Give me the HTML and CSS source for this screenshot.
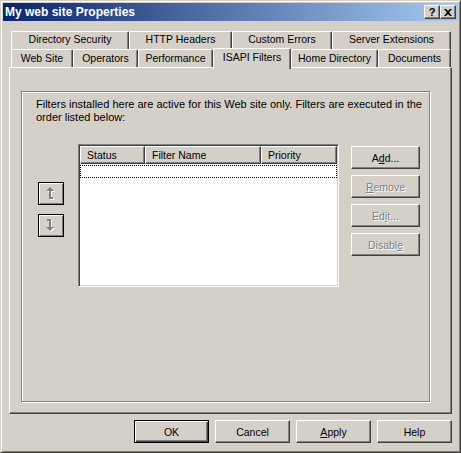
FILE: index.html
```
<!DOCTYPE html>
<html lang="en">
<head>
    <meta charset="UTF-8">
    <meta name="viewport" content="width=device-width, initial-scale=1.0">
    <title>My web site Properties</title>
    <link rel="stylesheet" href="styles.css">
</head>
<body>
    <div class="window">
        <div class="titlebar">
            <span class="title">My web site Properties</span>
            <div class="caption-buttons">
                <span class="cap-btn help">?</span>
                <span class="cap-btn">
                    <svg width="8" height="7" viewBox="0 0 8 7"><path d="M0 0h2l2 2 2-2h2L5 3.5 8 7H6L4 5 2 7H0l3-3.5z" fill="#000"/></svg>
                </span>
            </div>
        </div>

        <div class="content">
            <div class="tabs">
                <div class="tab-row back">
                    <div class="tab" style="width:118px">Directory Security</div>
                    <div class="tab" style="width:103px">HTTP Headers</div>
                    <div class="tab" style="width:100px">Custom Errors</div>
                    <div class="tab" style="width:119px">Server Extensions</div>
                </div>
                <div class="tab-row front">
                    <div class="tab" style="width:62px">Web Site</div>
                    <div class="tab" style="width:65px">Operators</div>
                    <div class="tab" style="width:75px">Performance</div>
                    <div class="tab selected">ISAPI Filters</div>
                    <div class="tab" style="width:87px">Home Directory</div>
                    <div class="tab" style="width:73px">Documents</div>
                </div>
            </div>

            <div class="panel">
                <div class="group">
                    <p class="intro">Filters installed here are active for this Web site only. Filters are executed in the<br>order listed below:</p>
                    <div class="filters">
                        <div class="order-buttons">
                            <button class="arrow-btn">
                                <svg width="10" height="13" viewBox="0 0 10 13">
                                    <path d="M5 1l4 4H6v6h2v2H4V5H1z" fill="#fff"/>
                                    <path d="M4 0l4 4H5v6h2v2H3V4H0z" fill="#808080"/>
                                </svg>
                            </button>
                            <button class="arrow-btn">
                                <svg width="10" height="13" viewBox="0 0 10 13">
                                    <path d="M5 13L1 9H4V3H2V1H6V9H9Z" fill="#fff"/>
                                    <path d="M4 12L0 8H3V2H1V0H5V8H8Z" fill="#808080"/>
                                </svg>
                            </button>
                        </div>
                        <div class="listview">
                            <div class="list-header">
                                <div class="col" style="width:65px">Status</div>
                                <div class="col" style="width:116px">Filter Name</div>
                                <div class="col last">Priority</div>
                            </div>
                            <div class="focus-row"></div>
                        </div>
                        <div class="side-buttons">
                            <button class="btn">A<u>d</u>d...</button>
                            <button class="btn" disabled><u>R</u>emove</button>
                            <button class="btn" disabled>Ed<u>i</u>t...</button>
                            <button class="btn" disabled>Disabl<u>e</u></button>
                        </div>
                    </div>
                </div>
            </div>

            <div class="dialog-buttons">
                <button class="btn wide default">OK</button>
                <button class="btn wide">Cancel</button>
                <button class="btn wide"><u>A</u>pply</button>
                <button class="btn wide">Help</button>
            </div>
        </div>
    </div>
</body>
</html>
```

FILE: styles.css
```
body {
    margin: 0;
    background: #d4d0c8;
    font-family: "Liberation Sans", Arial, sans-serif;
    font-size: 10.5px;
    color: #000;
}
.window {
    width: 461px;
    height: 453px;
    box-sizing: border-box;
    border: 1px solid;
    border-color: #d4d0c8 #404040 #404040 #d4d0c8;
    box-shadow: inset 1px 1px #fff, inset -1px -1px #808080;
    padding: 2px;
    background: #d4d0c8;
}
.titlebar {
    height: 18px;
    display: flex;
    align-items: center;
    justify-content: space-between;
    padding-left: 2px;
    background: linear-gradient(to right, #0a246a, #a6caf0);
}
.title {
    color: #fff;
    font-weight: bold;
    font-size: 12px;
}
.caption-buttons {
    display: flex;
    margin-right: 2px;
}
.cap-btn {
    width: 16px;
    height: 14px;
    box-sizing: border-box;
    display: flex;
    align-items: center;
    justify-content: center;
    background: #d4d0c8;
    border: 1px solid;
    border-color: #fff #404040 #404040 #fff;
    box-shadow: inset -1px -1px #808080;
}
.cap-btn.help {
    font-weight: bold;
    font-size: 11px;
}
.content {
    padding: 10px 6px 0 6px;
}
.tabs {
    height: 36px;
    padding-left: 2px;
    display: flex;
    flex-direction: column;
}
.tab-row {
    display: flex;
    height: 18px;
    align-items: flex-end;
}
.tab {
    height: 18px;
    box-sizing: border-box;
    border-top: 1px solid #fff;
    border-left: 1px solid #fff;
    border-right: 1px solid #404040;
    border-radius: 2px 2px 0 0;
    box-shadow: inset -1px 0 #808080;
    text-align: center;
    line-height: 16px;
    white-space: nowrap;
    background: #d4d0c8;
}
.tab-row.back .tab {
    height: 19px;
    align-self: flex-start;
    line-height: 15px;
}
.tab-row.front {
    position: relative;
    z-index: 1;
}
.tab.selected {
    width: 78px;
    height: 21px;
    margin-bottom: -2px;
    line-height: 17px;
    position: relative;
    z-index: 2;
}
.panel {
    height: 347px;
    box-sizing: border-box;
    border: 1px solid;
    border-color: #fff #404040 #404040 #fff;
    box-shadow: inset -1px -1px #808080;
    padding: 23px 0 0 11px;
}
.group {
    width: 409px;
    height: 311px;
    box-sizing: border-box;
    border: 1px solid #808080;
    box-shadow: inset 1px 1px #fff, 1px 1px #fff;
}
.intro {
    margin: 6px 0 0 14px;
    line-height: 13px;
    font-size: 11px;
    white-space: nowrap;
}
.filters {
    display: flex;
    margin-top: 20px;
    padding-left: 16px;
}
.order-buttons {
    width: 26px;
    display: flex;
    flex-direction: column;
    gap: 9px;
    padding-top: 38px;
}
.arrow-btn {
    width: 26px;
    height: 23px;
    padding: 0;
    display: flex;
    align-items: center;
    justify-content: center;
    background: #d4d0c8;
    border: 1px solid #000;
    box-shadow: inset 1px 1px #fff, inset -1px -1px #808080;
}
.listview {
    width: 261px;
    height: 143px;
    margin-left: 14px;
    box-sizing: border-box;
    background: #fff;
    border: 1px solid;
    border-color: #808080 #fff #fff #808080;
    box-shadow: inset 1px 1px #404040, inset -1px -1px #d4d0c8;
    padding: 1px;
}
.list-header {
    display: flex;
    height: 18px;
}
.col {
    box-sizing: border-box;
    height: 18px;
    line-height: 16px;
    padding-left: 6px;
    background: #d4d0c8;
    border: 1px solid;
    border-color: #fff #404040 #404040 #fff;
    box-shadow: inset -1px -1px #808080;
    white-space: nowrap;
}
.col.last {
    flex: 1;
}
.focus-row {
    height: 13px;
    margin-top: 1px;
    box-sizing: border-box;
    border: 1px dotted #000;
}
.side-buttons {
    display: flex;
    flex-direction: column;
    gap: 6px;
    margin-left: 12px;
    padding-top: 2px;
}
.btn {
    width: 69px;
    height: 23px;
    padding: 0;
    font-family: inherit;
    font-size: 10.5px;
    color: #000;
    background: #d4d0c8;
    border: 1px solid;
    border-color: #fff #404040 #404040 #fff;
    box-shadow: inset -1px -1px #808080;
}
.btn:disabled {
    color: #808080;
    text-shadow: 1px 1px #fff;
}
.dialog-buttons {
    display: flex;
    justify-content: flex-end;
    gap: 6px;
    margin-top: 6px;
}
.btn.wide {
    width: 75px;
}
.btn.default {
    border: 1px solid #000;
    box-shadow: inset 1px 1px #fff, inset -1px -1px #404040, inset -2px -2px #808080;
}
```
